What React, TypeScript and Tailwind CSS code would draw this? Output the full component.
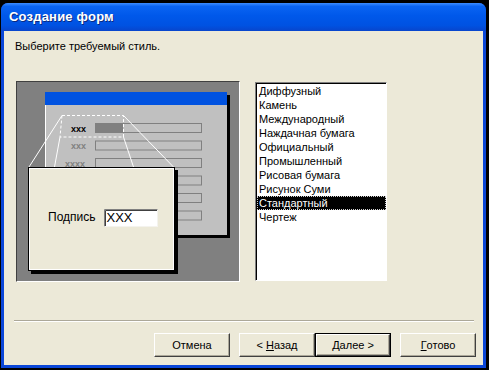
import React from 'react'

const styles = [
  'Диффузный',
  'Камень',
  'Международный',
  'Наждачная бумага',
  'Официальный',
  'Промышленный',
  'Рисовая бумага',
  'Рисунок Суми',
  'Стандартный',
  'Чертеж',
]

const font = { fontFamily: '"Liberation Sans", Arial, sans-serif' }

// рисунок-превью стиля формы
function StylePreview() {
  const rows = [123, 140.5, 158, 175.5, 193, 210.5]
  return (
    <div className="w-[224px] h-[201px] border-t border-l border-t-[#404040] border-l-[#404040] border-r border-b border-r-white border-b-white bg-[#808080]">
      <svg width="222" height="199" viewBox="17 82 222 199" className="block">
        {/* окно формы */}
        <rect x="48" y="95" width="182" height="143" fill="#000" />
        <rect x="45" y="92" width="182" height="143" fill="#c0c0c0" />
        <rect x="45" y="92" width="182" height="13" fill="#0052e0" />
        <line x1="45.5" y1="105" x2="45.5" y2="235" stroke="#fff" />
        {rows.map((y, i) => (
          <rect key={i} x="95.5" y={y + 0.5} width="106" height="9" fill="none" stroke="#808080" />
        ))}
        <rect x="96" y="124" width="27" height="8" fill="#808080" />
        <text x="71" y="131.5" fontSize="9" fontWeight="bold" fill="#000" style={font}>xxx</text>
        <text x="71" y="149" fontSize="9" fontWeight="bold" fill="#808080" style={font}>xxx</text>
        <text x="65" y="166.5" fontSize="9" fontWeight="bold" fill="#808080" style={font}>xxxx</text>
        {/* лупа */}
        <polygon
          points="62,115.5 123.5,115.5 123.5,137 60,137"
          fill="none"
          stroke="#fff"
          strokeDasharray="3 2"
        />
        <line x1="62" y1="115.5" x2="29" y2="167" stroke="#fff" />
        <line x1="60" y1="137" x2="54.5" y2="167" stroke="#fff" />
        <line x1="123.5" y1="115.5" x2="173.5" y2="167" stroke="#fff" />
        <line x1="123.5" y1="137" x2="133.5" y2="167" stroke="#fff" />
        {/* увеличенная подпись */}
        <rect x="31" y="170" width="147" height="104" fill="#000" />
        <rect x="28.5" y="167.5" width="146" height="103" fill="#ece9d8" stroke="#000" />
        <rect x="29.5" y="168.5" width="144" height="101" fill="none" stroke="#fff" />
        <text x="48" y="221" fontSize="12" fill="#000" style={font}>Подпись</text>
        <rect x="104" y="209.5" width="54" height="17" fill="#fff" />
        <polyline points="104.5,226.5 104.5,209.5 158,209.5" fill="none" stroke="#808080" />
        <polyline points="105.5,226 105.5,210.5 157,210.5" fill="none" stroke="#404040" />
        <polyline points="104.5,226.5 157.5,226.5 157.5,209.5" fill="none" stroke="#f4f3ee" />
        <text x="106.5" y="222" fontSize="13" fill="#000" style={font} fontWeight="300">XXX</text>
      </svg>
    </div>
  )
}

function WizardButton({ children, isDefault }: { children: React.ReactNode; isDefault?: boolean }) {
  const inner = (
    <div
      className={
        isDefault
          ? 'w-[74px] h-[22px] flex items-center justify-center border-t border-l border-white border-r border-b border-r-[#404040] border-b-[#404040] shadow-[inset_-1px_-1px_0_#aca899] text-[11px] text-black'
          : 'w-[76px] h-[24px] flex items-center justify-center border-t border-l border-white border-r border-b border-r-[#404040] border-b-[#404040] shadow-[inset_-1px_-1px_0_#aca899] text-[11px] text-black'
      }
    >
      {children}
    </div>
  )
  if (isDefault) {
    return <div className="border border-black">{inner}</div>
  }
  return inner
}

export default function App() {
  return (
    <div className="w-[489px] h-[370px] bg-black pt-[3px] pl-[1px] overflow-hidden" style={font}>
      <div className="w-[485px] h-[365px] flex flex-col rounded-t-[7px] overflow-hidden bg-[#0a46d8]">
        {/* заголовок окна */}
        <div className="h-[28px] shrink-0 flex items-center pl-[8px] bg-[linear-gradient(180deg,#3d8dff_0%,#0a64f2_12%,#0058ea_45%,#0052e2_80%,#0845cc_100%)]">
          <span className="text-white font-bold text-[13px] tracking-[0.2px] [text-shadow:1px_1px_0_#0a2a80]">
            Создание форм
          </span>
        </div>

        <div className="flex-1 mx-[3px] mb-[3px] bg-[#ece9d8] flex flex-col">
          <div className="mt-[9px] ml-[11px] text-[11px] leading-[13px] text-black">
            Выберите требуемый стиль.
          </div>

          <div className="mt-[28px] ml-[12px] flex gap-[15px]">
            <StylePreview />
            <div className="mt-[1px] w-[132px] h-[199px] bg-white border-t border-l border-t-[#808080] border-l-[#808080] border-r border-b border-r-white border-b-white shadow-[inset_1px_1px_0_#000]">
              <ul className="pt-[1px]">
                {styles.map((s) => (
                  <li
                    key={s}
                    className={
                      s === 'Стандартный'
                        ? 'h-[14px] ml-[1px] pl-[1px] text-[11px] leading-[12px] bg-black text-white border border-dotted border-[#d0d0d0]'
                        : 'h-[14px] pl-[3px] text-[11px] leading-[14px] text-black'
                    }
                  >
                    {s}
                  </li>
                ))}
              </ul>
            </div>
          </div>

          <div className="mt-[38px] ml-[10px] w-[460px] border-t border-t-[#aca899] border-b border-b-white" />

          <div className="mt-[11px] flex justify-end pr-[7px]">
            <WizardButton>Отмена</WizardButton>
            <div className="ml-[9px]">
              <WizardButton>
                &lt; <span className="underline ml-[3px]">Н</span>азад
              </WizardButton>
            </div>
            <WizardButton isDefault>
              <span className="underline">Д</span>алее &gt;
            </WizardButton>
            <div className="ml-[9px]">
              <WizardButton>
                <span className="underline">Г</span>отово
              </WizardButton>
            </div>
          </div>
        </div>
      </div>
    </div>
  )
}
